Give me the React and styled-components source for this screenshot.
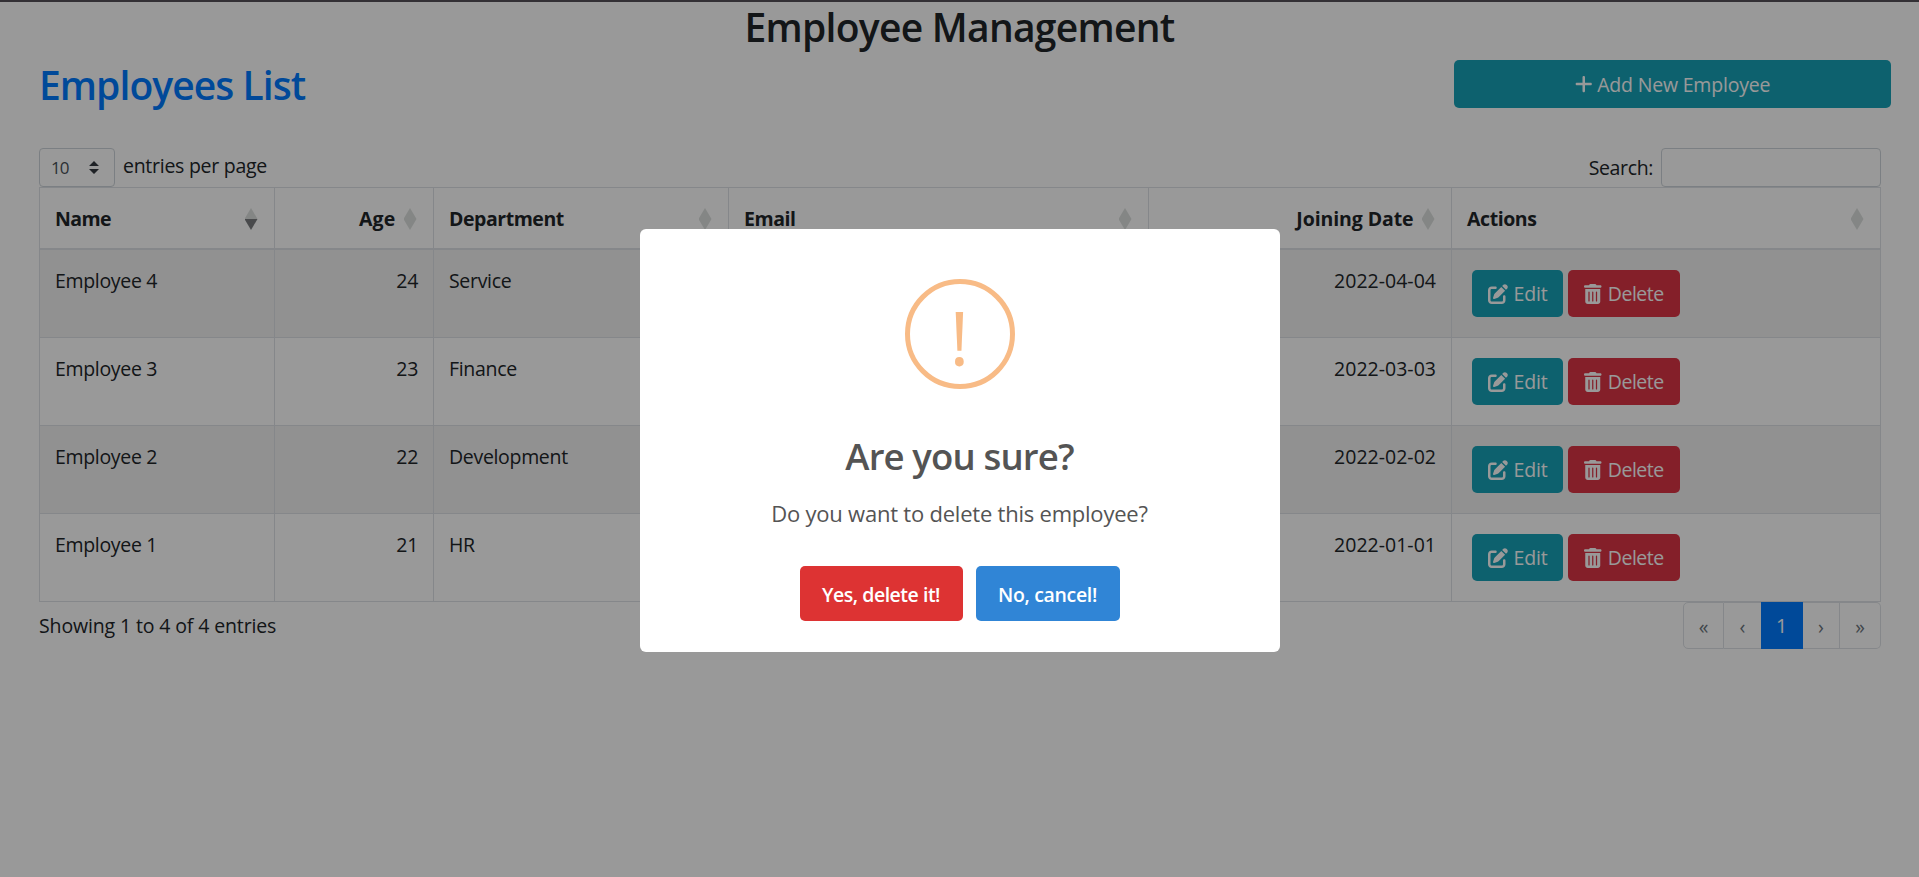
import React from "react";
import styled, { createGlobalStyle } from "styled-components";
import { FaPenToSquare, FaPlus, FaTrashCan } from "react-icons/fa6";

const GlobalStyle = createGlobalStyle`
  *, *::before, *::after { box-sizing: border-box; }
  html, body { margin: 0; height: 100%; overflow: hidden; }
  body {
    background: #fff;
    color: #212529;
    font-family: "Segoe UI", "Open Sans", "Noto Sans", sans-serif;
    font-size: 19.5px;
    line-height: 30px;
    letter-spacing: -0.3px;
  }
  button, input { font-family: inherit; }
`;

const Page = styled.div`
  height: 100vh;
  border-top: 2px solid #555159;
`;

const Title = styled.h2`
  margin: 0 0 8px;
  font-size: 39px;
  font-weight: 600;
  line-height: 50px;
  letter-spacing: -0.73px;
  text-align: center;
`;

const ListHeader = styled.div`
  display: flex;
  justify-content: space-between;
  align-items: flex-start;
  height: 88px;
  padding: 0 28px 0 39px;
`;

const ListTitle = styled.h2`
  margin: 0;
  color: #007bff;
  font-size: 39px;
  font-weight: 600;
  line-height: 50px;
  letter-spacing: -0.93px;
`;

const Button = styled.button`
  display: inline-flex;
  align-items: center;
  justify-content: center;
  gap: ${(p) => p.$gap || "6px"};
  width: ${(p) => p.$width};
  height: ${(p) => p.$height || "47px"};
  padding: 1px 0 0;
  border: 0;
  border-radius: 5px;
  background: ${(p) => (p.$danger ? "#dc3545" : "#17a2b8")};
  color: #fff;
  font-size: 19.5px;
  line-height: 30px;
  letter-spacing: ${(p) => p.$track || "-0.2px"};

  svg {
    width: ${(p) => p.$icon || "20px"};
    height: 20px;
    flex: none;
    margin-top: ${(p) => p.$lift || "0"};
  }
`;

const TableArea = styled.div`
  padding: 0 38px 0 39px;
`;

const Controls = styled.div`
  display: flex;
  justify-content: space-between;
  height: 39px;
`;

const LengthControl = styled.div`
  display: flex;
  gap: 8px;
  letter-spacing: -0.27px;
`;

const Select = styled.div`
  display: flex;
  align-items: center;
  justify-content: space-between;
  width: 76px;
  height: 39px;
  padding: 0 15px 0 11px;
  border: 1px solid #ced4da;
  border-radius: 4px;
  color: #495057;
  font-size: 17px;
  letter-spacing: -0.9px;
`;

const EntriesLabel = styled.span`
  margin-top: 3px;
`;

const SearchControl = styled.label`
  display: flex;
  align-items: center;
  gap: 8px;
  letter-spacing: -0.36px;
`;

const SearchInput = styled.input`
  width: 220px;
  height: 39px;
  padding: 0 10px;
  border: 1px solid #ced4da;
  border-radius: 4px;
  background: #fff;
`;

const Table = styled.table`
  width: 1842px;
  table-layout: fixed;
  border-collapse: separate;
  border-spacing: 0;
  border: solid #dee2e6;
  border-width: 1px 0 0 1px;
`;

const HeadCell = styled.th`
  height: 62px;
  padding: 0 16.5px 0 15px;
  border: solid #dee2e6;
  border-width: 0 1px 2px 0;
  font-weight: 700;
  letter-spacing: ${(p) => p.$track};
`;

const HeadContent = styled.div`
  display: flex;
  align-items: center;
  justify-content: ${(p) => (p.$end ? "flex-end" : "space-between")};
  gap: 8px;
  padding-top: 2px;
`;

const SortIcon = styled.span`
  display: flex;
  flex-direction: column;
  flex: none;

  &::before, &::after {
    content: "";
    width: 13px;
    height: 11px;
    background: #dde0de;
  }
  &::before { clip-path: polygon(50% 0, 100% 100%, 0 100%); }
  &::after {
    background: ${(p) => (p.$desc ? "#7a7c7f" : "#dde0de")};
    clip-path: polygon(0 0, 100% 0, 50% 100%);
  }
`;

const Row = styled.tr`
  background: ${(p) => (p.$striped ? "#f2f2f2" : "#fff")};
`;

const Cell = styled.td`
  height: 88px;
  padding: 16px 15px 0;
  border: solid #dee2e6;
  border-width: 0 1px 1px 0;
  vertical-align: top;
  text-align: ${(p) => (p.$end ? "right" : "left")};
  letter-spacing: ${(p) => p.$track || "-0.32px"};
`;

const RowActions = styled.div`
  display: flex;
  gap: 5px;
  padding: 4px 0 0 5px;
`;

const Footer = styled.div`
  display: flex;
  justify-content: space-between;
  align-items: flex-start;
`;

const Summary = styled.div`
  margin-top: 9px;
  letter-spacing: -0.13px;
`;

const Pagination = styled.div`
  display: flex;
  height: 47px;
`;

const PageLink = styled.span`
  display: flex;
  align-items: center;
  justify-content: center;
  width: ${(p) => p.$width};
  padding-top: ${(p) => (p.$active ? "1px" : "3px")};
  border: 1px solid #dee2e6;
  border-left-width: ${(p) => (p.$first ? "1px" : "0")};
  border-radius: ${(p) => (p.$first ? "5px 0 0 5px" : p.$last ? "0 5px 5px 0" : "0")};
  color: #6c757d;
  letter-spacing: 0;

  ${(p) => p.$open && "border-right-width: 0;"}
  ${(p) => p.$active && "background: #007bff; border-color: #007bff; color: #fff;"}
`;

const Overlay = styled.div`
  position: fixed;
  inset: 0;
  display: flex;
  align-items: center;
  justify-content: center;
  padding-top: 4px;
  background: rgba(0, 0, 0, 0.4);
`;

const Modal = styled.div`
  display: flex;
  flex-direction: column;
  align-items: center;
  width: 640px;
  height: 423px;
  padding-top: 50px;
  border-radius: 6px;
  background: #fff;
  color: #545454;
`;

const WarningIcon = styled.div`
  display: flex;
  align-items: center;
  justify-content: center;
  width: 110px;
  height: 110px;
  padding-top: 5px;
  border: 5px solid #f8bb86;
  border-radius: 50%;
  color: #f8bb86;
  font-size: 75px;
  line-height: 100px;
  letter-spacing: 0;
`;

const ModalTitle = styled.h2`
  margin: 44px 0 0;
  font-size: 36.6px;
  font-weight: 600;
  line-height: 46px;
  letter-spacing: -0.88px;
`;

const ModalText = styled.p`
  margin: 18px 0 0;
  font-size: 22px;
  line-height: 33px;
  letter-spacing: -0.22px;
`;

const ModalActions = styled.div`
  display: flex;
  gap: 13px;
  margin-top: 36px;
`;

const ModalButton = styled.button`
  width: ${(p) => p.$width};
  height: 55px;
  padding: 2px 0 0;
  border: 0;
  border-radius: 5px;
  background: ${(p) => p.$color};
  color: #fff;
  font-size: 19.5px;
  font-weight: 600;
  letter-spacing: ${(p) => p.$track};
`;

const columns = [
  { label: "Name", width: 235, desc: true, track: "-0.6px" },
  { label: "Age", width: 159, end: true, track: "0.2px" },
  { label: "Department", width: 295, track: "-0.46px" },
  { label: "Email", width: 420, track: "-0.46px" },
  { label: "Joining Date", width: 303, end: true, track: "-0.1px" },
  { label: "Actions", width: 429, track: "-0.42px" },
];

const employees = [
  { name: "Employee 4", age: 24, department: "Service", date: "2022-04-04" },
  { name: "Employee 3", age: 23, department: "Finance", date: "2022-03-03" },
  { name: "Employee 2", age: 22, department: "Development", date: "2022-02-02" },
  { name: "Employee 1", age: 21, department: "HR", date: "2022-01-01" },
];

function SelectArrows() {
  return (
    <svg width="10" height="13" viewBox="0 0 10 13" fill="#343a40">
      <path d="M5 0 10 5H0zM5 13 0 8h10z" />
    </svg>
  );
}

export default function App() {
  return (
    <>
      <GlobalStyle />
      <Page>
        <Title>Employee Management</Title>
        <ListHeader>
          <ListTitle>Employees List</ListTitle>
          <Button $width="437px" $height="48px" $icon="17.5px" $gap="5px" $lift="-1px">
            <FaPlus />
            Add New Employee
          </Button>
        </ListHeader>
        <TableArea>
          <Controls>
            <LengthControl>
              <Select>
                10
                <SelectArrows />
              </Select>
              <EntriesLabel>entries per page</EntriesLabel>
            </LengthControl>
            <SearchControl>
              Search:
              <SearchInput type="search" />
            </SearchControl>
          </Controls>
          <Table>
            <colgroup>
              {columns.map((c) => (
                <col key={c.label} width={c.width} />
              ))}
            </colgroup>
            <thead>
              <tr>
                {columns.map((c) => (
                  <HeadCell key={c.label} $track={c.track}>
                    <HeadContent $end={c.end}>
                      {c.label}
                      <SortIcon $desc={c.desc} />
                    </HeadContent>
                  </HeadCell>
                ))}
              </tr>
            </thead>
            <tbody>
              {employees.map((e, i) => (
                <Row key={e.name} $striped={i % 2 === 0}>
                  <Cell>{e.name}</Cell>
                  <Cell $end>{e.age}</Cell>
                  <Cell>{e.department}</Cell>
                  <Cell />
                  <Cell $end $track="0.02px">{e.date}</Cell>
                  <Cell>
                    <RowActions>
                      <Button $width="91px">
                        <FaPenToSquare />
                        Edit
                      </Button>
                      <Button $width="112px" $danger $icon="17.5px" $track="-0.5px">
                        <FaTrashCan />
                        Delete
                      </Button>
                    </RowActions>
                  </Cell>
                </Row>
              ))}
            </tbody>
          </Table>
          <Footer>
            <Summary>Showing 1 to 4 of 4 entries</Summary>
            <Pagination>
              <PageLink $first $width="41px">«</PageLink>
              <PageLink $open $width="37px">‹</PageLink>
              <PageLink $active $width="42px">1</PageLink>
              <PageLink $width="37px">›</PageLink>
              <PageLink $last $width="41px">»</PageLink>
            </Pagination>
          </Footer>
        </TableArea>
      </Page>
      <Overlay>
        <Modal>
          <WarningIcon>!</WarningIcon>
          <ModalTitle>Are you sure?</ModalTitle>
          <ModalText>Do you want to delete this employee?</ModalText>
          <ModalActions>
            <ModalButton $width="163px" $color="#dd3333" $track="-0.48px">
              Yes, delete it!
            </ModalButton>
            <ModalButton $width="144px" $color="#3085d6" $track="-0.33px">
              No, cancel!
            </ModalButton>
          </ModalActions>
        </Modal>
      </Overlay>
    </>
  );
}
